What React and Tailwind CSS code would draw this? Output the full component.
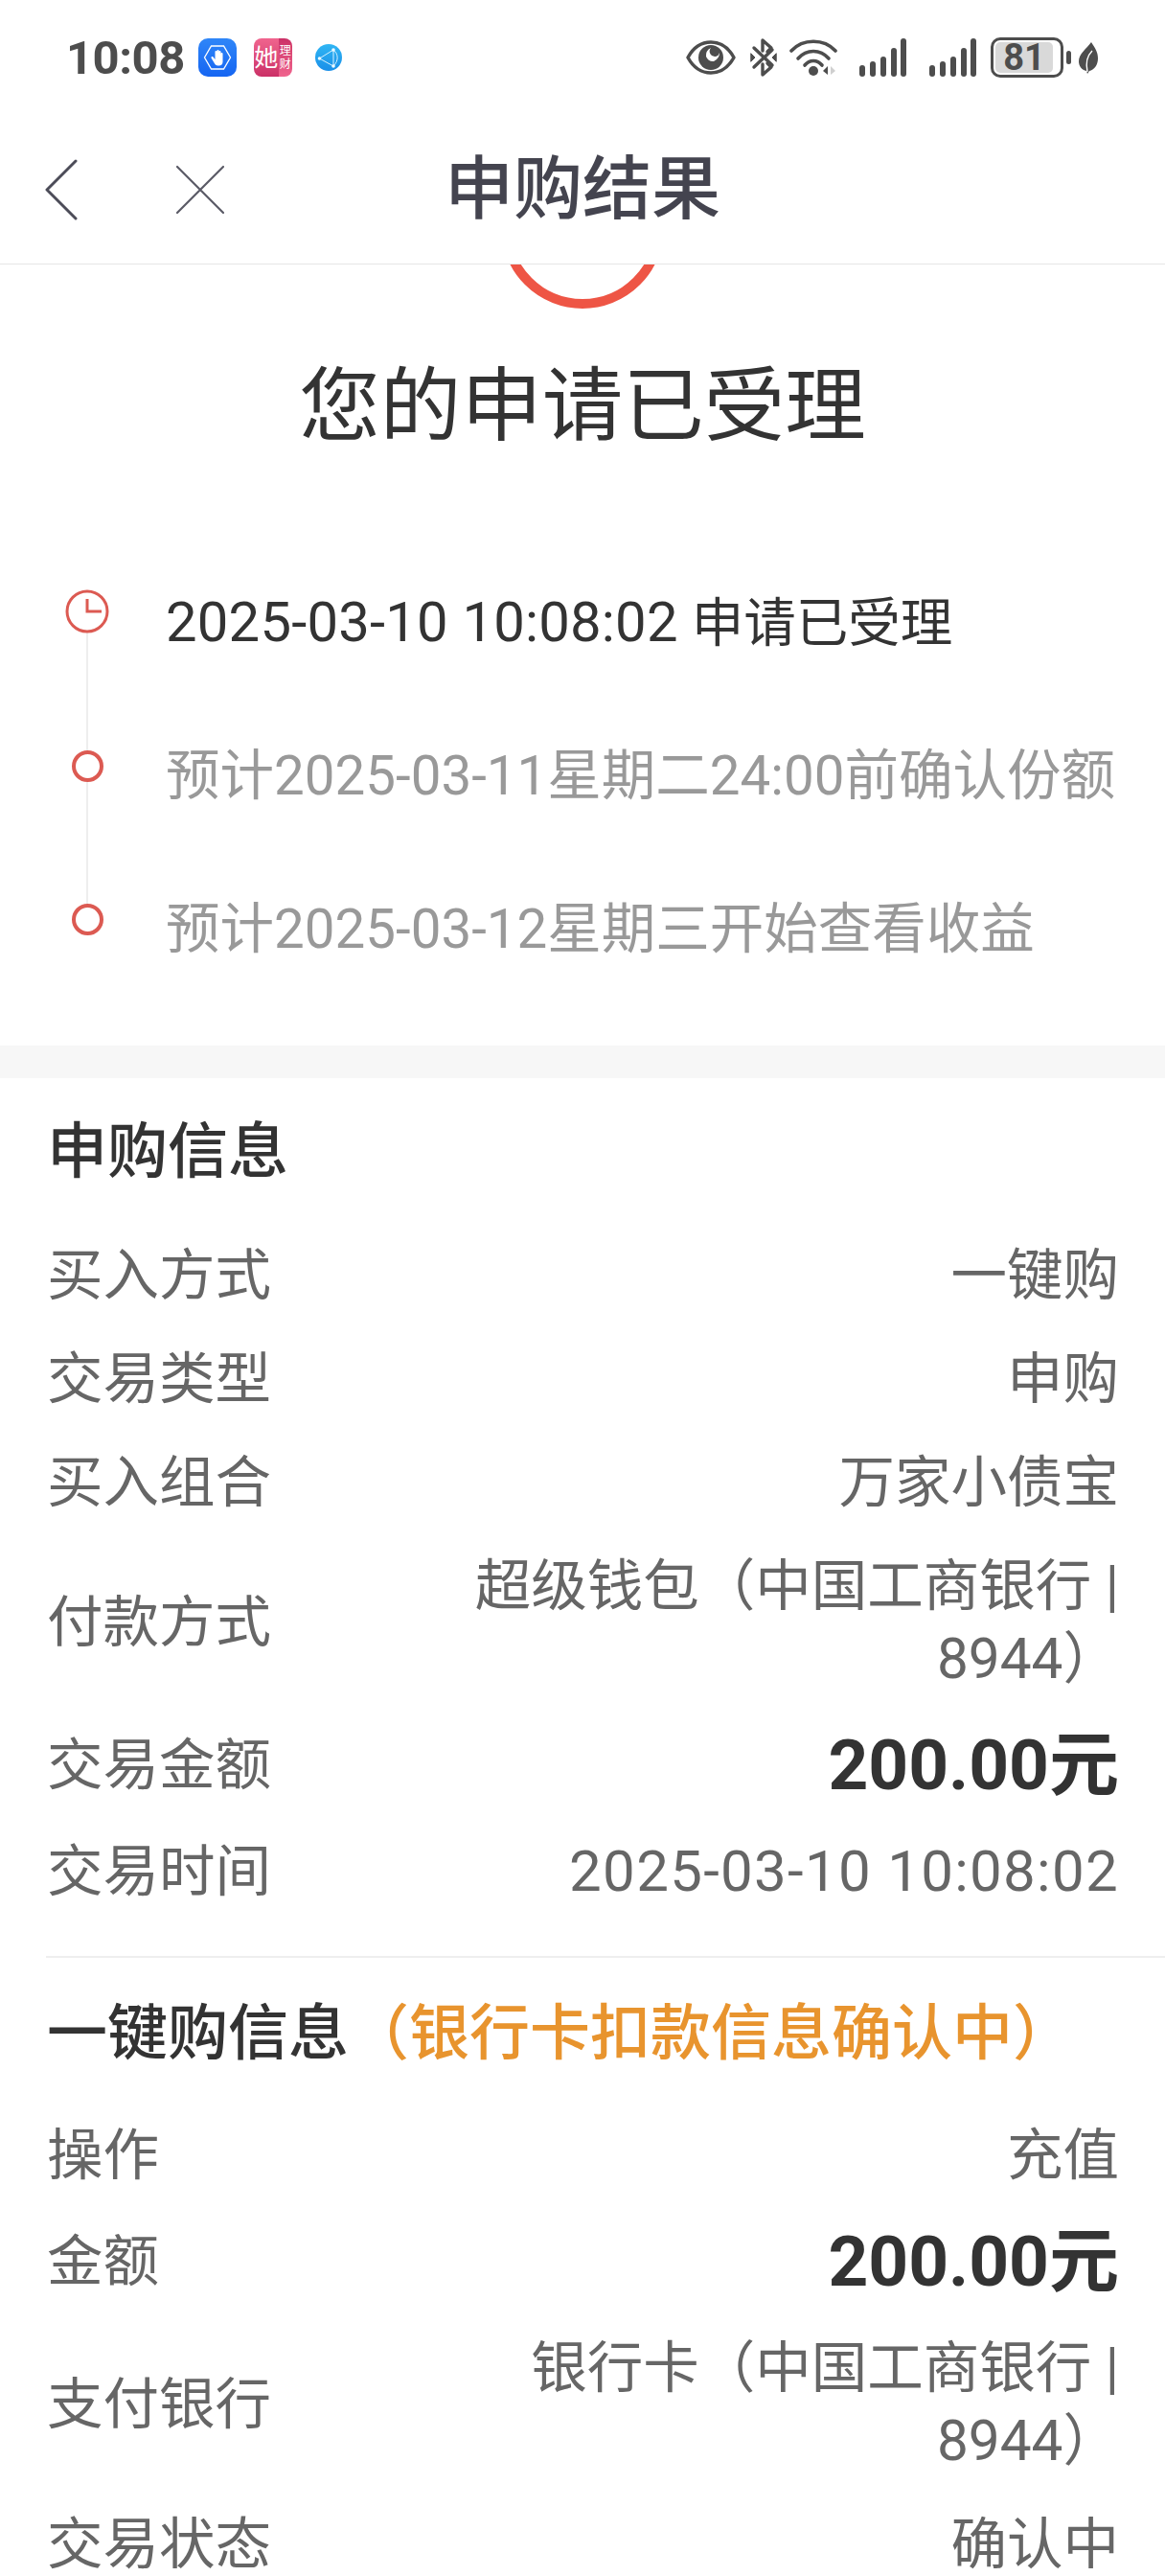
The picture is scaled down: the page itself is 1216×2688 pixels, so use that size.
// App.jsx
const FONT = 'font-["Roboto","Noto_Sans_CJK_SC",sans-serif]';

const BlueAppIcon = () => (
  <svg width="40" height="40" viewBox="0 0 40 40">
    <defs>
      <linearGradient id="blueApp" x1="0" y1="0" x2="0" y2="1">
        <stop offset="0" stopColor="#2f86f8" />
        <stop offset="1" stopColor="#1565f2" />
      </linearGradient>
    </defs>
    <rect width="40" height="40" rx="10" fill="url(#blueApp)" />
    <path d="M13.5 8h13L33.5 20l-7 12h-13L6.5 20z" fill="none" stroke="#fff" strokeWidth="1.3" />
    <path d="M13.5 20.5l3 5c1 2 2 3 4 3h1c2.500 0 4-1.500 4-4v-8.500a1 1 0 0 0-2 0v3.500-5.500a1 1 0 0 0-2 0v5.500-6.500a1 1 0 0 0-2 0v6.500-5.500a1 1 0 0 0-2 0v8l-2-2.500c-1-1-2.500 0-2 1z" fill="#fff" />
  </svg>
);

const PinkAppIcon = () => (
  <div className="flex h-10 w-10 overflow-hidden rounded-[8px] text-white">
    <div className="flex w-[26px] items-center justify-center bg-linear-to-b from-[#f0648e] to-[#cb3067] text-[25px] leading-none">她</div>
    <div className="flex w-[14px] flex-col items-center justify-center bg-linear-to-b from-[#cb3067] to-[#f0648e] text-[12px] leading-[14px]">
      <span>理</span>
      <span>财</span>
    </div>
  </div>
);

const GlobeIcon = () => (
  <svg width="28" height="28" viewBox="0 0 28 28">
    <defs>
      <linearGradient id="globe" x1="0" y1="0" x2="0" y2="1">
        <stop offset="0" stopColor="#30b6f4" />
        <stop offset="1" stopColor="#1a8fe8" />
      </linearGradient>
    </defs>
    <circle cx="14" cy="14" r="14" fill="url(#globe)" />
    <path d="M4.500 15L19 6L19 23L4.500 15M19 6C24 10 25 17 19 23" fill="none" stroke="#d5f1ff" strokeWidth="1" />
    <circle cx="4.500" cy="15" r="1.800" fill="#eefaff" />
    <circle cx="19" cy="6" r="1.800" fill="#eefaff" />
    <circle cx="19" cy="23" r="1.800" fill="#eefaff" />
  </svg>
);

const EyeIcon = () => (
  <svg width="52" height="36" viewBox="0 0 52 36" className="text-[#4d4d4d]">
    <path d="M2 18C8 7 17 2 26 2s18 5 24 16c-6 11-15 16-24 16S8 29 2 18z" fill="none" stroke="currentColor" strokeWidth="3.500" strokeLinejoin="round" />
    <circle cx="26" cy="18" r="13" fill="currentColor" />
    <path d="M26 8a5.500 5.500 0 0 0 5 9a5.500 5.500 0 0 0 4-4a10 10 0 0 1-6 9a8 8 0 0 1-8-5 9 9 0 0 1 5-9z" fill="#fff" />
  </svg>
);

const BluetoothIcon = () => (
  <svg width="28" height="40" viewBox="0 0 28 40" fill="none" stroke="#4d4d4d" strokeWidth="3.400" strokeLinecap="round" strokeLinejoin="round">
    <path d="M4 10L23 28" />
    <path d="M4 30L23 12" />
    <path d="M13 13V2l9 8-4 4" />
    <path d="M13 27v11l9-8-4-4" />
    <path d="M1 16l4 4-4 4z" fill="#4d4d4d" strokeWidth="1" />
    <path d="M27 16l-4 4 4 4z" fill="#4d4d4d" strokeWidth="1" />
  </svg>
);

const WifiIcon = () => (
  <svg width="50" height="40" viewBox="0 0 50 40">
    <g fill="none" stroke="#4d4d4d" strokeWidth="3.600" strokeLinecap="round">
      <path d="M2 13C14 0 36 0 48 13" />
      <path d="M9 21C18 11 32 11 41 21" />
      <path d="M16 28C21 22 29 22 34 28" />
    </g>
    <circle cx="25" cy="34" r="5" fill="#4d4d4d" />
    <path d="M40 29v9l-5-4z" fill="#4d4d4d" />
    <path d="M43 29v9l5-4z" fill="#cfcfcf" />
  </svg>
);

const SignalIcon = () => (
  <svg width="49" height="40" viewBox="0 0 49 40" fill="#4d4d4d">
    <rect x="0" y="28" width="6" height="12" rx="3" />
    <rect x="11" y="24" width="6" height="16" rx="3" />
    <rect x="22" y="19" width="6" height="21" rx="3" />
    <rect x="33" y="10" width="6" height="30" rx="3" />
    <rect x="43" y="0" width="6" height="40" rx="3" />
  </svg>
);

const Battery = () => (
  <div className="flex items-center gap-[3px]">
    <div className="flex h-[42px] w-[76px] overflow-hidden rounded-[10px] border-[3px] border-[#4d4d4d] bg-white p-[2px]">
      <div className="flex w-[60px] items-center justify-center rounded-[5px] bg-[#d9d9d9] text-[38px] font-bold leading-none text-[#4d4d4d]">
        81
      </div>
    </div>
    <div className="h-[14px] w-[5px] rounded-full bg-[#4d4d4d]" />
  </div>
);

const LeafIcon = () => (
  <svg width="20" height="33" viewBox="0 0 20 33">
    <path d="M13 0c4 6 7 10 7 17 0 7-4 12-9 13l-2 3-1-3C3 29 0 25 0 20 0 12 8 7 13 0z" fill="#4d4d4d" />
    <path d="M9 31C7 22 9 14 14 9" fill="none" stroke="#fff" strokeWidth="1.400" />
  </svg>
);

const StatusBar = () => (
  <div className="flex h-[120px] items-center pl-[69px] pr-[70px]">
    <span className="mr-[14px] text-[49px] font-bold leading-none tracking-[-0.5px] text-[#4d4d4d]">10:08</span>
    <BlueAppIcon />
    <div className="ml-[18px]">
      <PinkAppIcon />
    </div>
    <div className="ml-[24px]">
      <GlobeIcon />
    </div>
    <div className="ml-auto flex items-center">
      <EyeIcon />
      <div className="ml-[15px]">
        <BluetoothIcon />
      </div>
      <div className="ml-[13px]">
        <WifiIcon />
      </div>
      <div className="ml-[23px]">
        <SignalIcon />
      </div>
      <div className="ml-[24px]">
        <SignalIcon />
      </div>
      <div className="ml-[15px]">
        <Battery />
      </div>
      <div className="ml-[8px]">
        <LeafIcon />
      </div>
    </div>
  </div>
);

const NavBar = () => (
  <div className="flex h-[156px] items-center border-b border-[#e6e6e6]">
    <div className="flex w-[272px] items-center pl-[47px]">
      <svg width="34" height="64" viewBox="0 0 34 64" fill="none" stroke="#4c4c58" strokeWidth="3" strokeLinecap="round" strokeLinejoin="round">
        <path d="M32 2L2 32l30 30" />
      </svg>
      <svg className="ml-[102px]" width="52" height="52" viewBox="0 0 52 52" fill="none" stroke="#5a5a66" strokeWidth="2.200" strokeLinecap="round">
        <path d="M2 2l48 48M50 2L2 50" />
      </svg>
    </div>
    <h1 className="w-[672px] text-center text-[72px] font-medium leading-none text-[#44444f]">申购结果</h1>
  </div>
);

const STEPS = [
  {
    key: 'accepted',
    text: (
      <>
        <span className="text-[58px] tracking-[0.2px]">2025-03-10 10:08:02</span>{' '}
        <span className="text-[54.5px]">申请已受理</span>
      </>
    ),
    active: true,
    height: 'h-[161px]',
  },
  { key: 'confirm', text: '预计2025-03-11星期二24:00前确认份额', height: 'h-[160px]' },
  { key: 'income', text: '预计2025-03-12星期三开始查看收益', height: 'h-[155px]' },
];

const ClockDot = () => (
  <svg width="46" height="46" viewBox="0 0 46 46" fill="#fff" stroke="#dc5a52" strokeWidth="3">
    <circle cx="23" cy="23" r="21" />
    <path d="M23 10v13h15" fill="none" />
  </svg>
);

const Timeline = () => (
  <div className="relative mt-[140px] pl-[68px]">
    <div className="absolute bottom-[120px] left-[90px] top-[23px] w-[2px] bg-[#eeeeee]" />
    {STEPS.map((step) => (
      <div key={step.key} className={`relative flex ${step.height}`}>
        <div className="flex h-[46px] w-[46px] items-center justify-center">
          {step.active ? (
            <ClockDot />
          ) : (
            <div className="h-[33px] w-[33px] rounded-full border-[4px] border-[#dc5a52] bg-white" />
          )}
        </div>
        <p className={`ml-[59px] pt-[1px] text-[56.5px] leading-[66px] ${step.active ? 'text-[#333333]' : 'text-[#999999]'}`}>
          {step.text}
        </p>
      </div>
    ))}
  </div>
);

const Row = ({ label, children, bold, date, className = 'py-[16px]' }) => (
  <div className={`flex items-center justify-between ${className}`}>
    <span className="shrink-0 text-[58.5px] leading-[76px] text-[#666666]">{label}</span>
    <span
      className={
        bold
          ? 'text-right text-[73px] font-bold leading-[114px] text-[#333333]'
          : `max-w-[700px] text-right leading-[76px] text-[#666666] ${date ? 'text-[60px] tracking-[1.3px]' : 'text-[58.5px]'}`
      }
    >
      {children}
    </span>
  </div>
);

const App = () => (
  <div className={`h-[2688px] w-[1216px] overflow-hidden bg-white ${FONT}`}>
    <StatusBar />
    <NavBar />

    <section className="overflow-hidden">
      <div className="flex flex-col items-center">
        <div className="-mt-[124px] h-[170px] w-[170px] shrink-0 rounded-full border-[10px] border-[#ee5545]" />
        <h2 className="mt-[53px] text-[84.5px] leading-[100px] text-[#333333]">您的申请已受理</h2>
      </div>
      <Timeline />
    </section>

    <div className="h-[34px] bg-[#f7f7f7]" />

    <section className="pl-[49px] pr-[48px] pt-[37px]">
      <h3 className="mb-[35px] text-[63px] font-medium leading-[80px] text-[#333333]">申购信息</h3>
      <Row label="买入方式">一键购</Row>
      <Row label="交易类型">申购</Row>
      <Row label="买入组合">万家小债宝</Row>
      <Row label="付款方式">超级钱包（中国工商银行 | 8944）</Row>
      <Row label="交易金额" bold className="">200.00元</Row>
      <Row label="交易时间" date>2025-03-10 10:08:02</Row>
    </section>

    <div className="ml-[48px] mt-[34px] h-[2px] bg-[#eeeeee]" />

    <section className="pl-[49px] pr-[48px] pt-[39px]">
      <h3 className="mb-[33px] text-[63px] font-medium leading-[80px] text-[#333333]">
        一键购信息<span className="text-[#e8942e]">（银行卡扣款信息确认中）</span>
      </h3>
      <Row label="操作">充值</Row>
      <Row label="金额" bold className="">200.00元</Row>
      <Row label="支付银行">银行卡（中国工商银行 | 8944）</Row>
      <Row label="交易状态">确认中</Row>
    </section>
  </div>
);

export default App;
